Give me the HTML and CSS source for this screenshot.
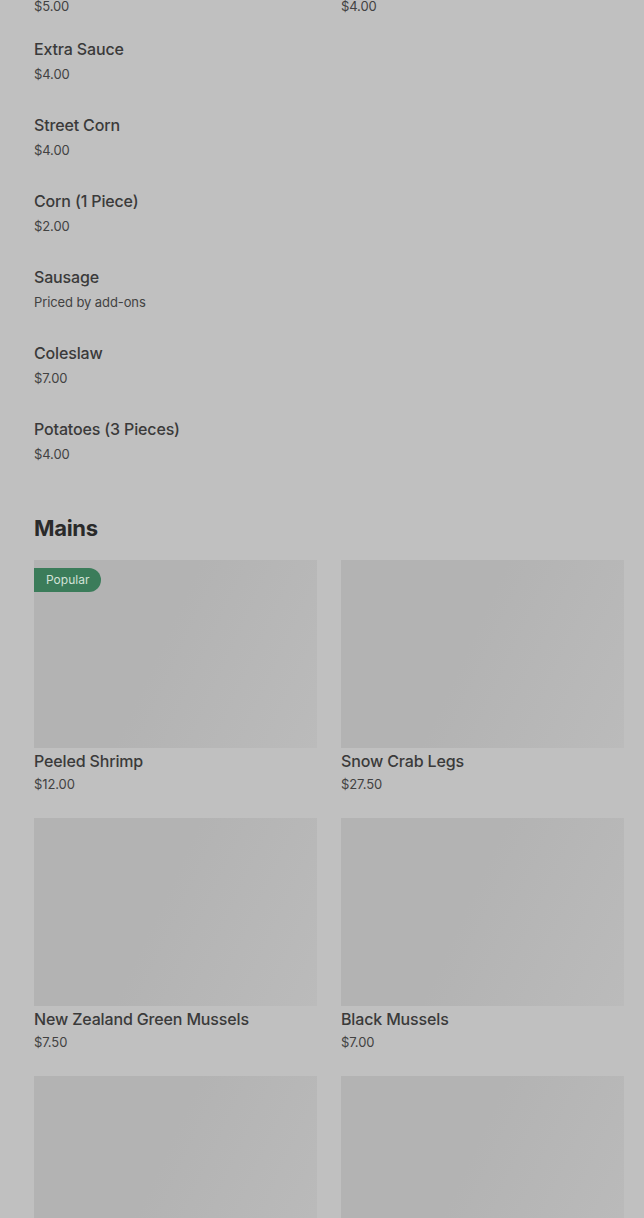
FILE: index.html
```html
<!DOCTYPE html>
<html lang="en">
<head>
    <meta charset="UTF-8">
    <meta name="viewport" content="width=device-width, initial-scale=1.0">
    <title>Menu</title>
    <link rel="stylesheet" href="styles.css">
</head>
<body>
    <div class="menu">
        <div class="item-grid">
            <div class="card">
                <div class="card-image"></div>
                <div class="item-name">Hush Puppies</div>
                <div class="item-price">$5.00</div>
            </div>
            <div class="card">
                <div class="card-image"></div>
                <div class="item-name">Cajun Fries</div>
                <div class="item-price">$4.00</div>
            </div>
        </div>

        <ul class="item-list">
            <li><div class="item-name">Extra Sauce</div><div class="item-price">$4.00</div></li>
            <li><div class="item-name">Street Corn</div><div class="item-price">$4.00</div></li>
            <li><div class="item-name">Corn (1 Piece)</div><div class="item-price">$2.00</div></li>
            <li><div class="item-name">Sausage</div><div class="item-price">Priced by add-ons</div></li>
            <li><div class="item-name">Coleslaw</div><div class="item-price">$7.00</div></li>
            <li><div class="item-name">Potatoes (3 Pieces)</div><div class="item-price">$4.00</div></li>
        </ul>

        <h2 class="section-title">Mains</h2>
        <div class="item-grid">
            <div class="card">
                <div class="card-image">
                    <span class="badge">Popular</span>
                </div>
                <div class="item-name">Peeled Shrimp</div>
                <div class="item-price">$12.00</div>
            </div>
            <div class="card">
                <div class="card-image"></div>
                <div class="item-name">Snow Crab Legs</div>
                <div class="item-price">$27.50</div>
            </div>
            <div class="card">
                <div class="card-image"></div>
                <div class="item-name">New Zealand Green Mussels</div>
                <div class="item-price">$7.50</div>
            </div>
            <div class="card">
                <div class="card-image"></div>
                <div class="item-name">Black Mussels</div>
                <div class="item-price">$7.00</div>
            </div>
            <div class="card">
                <div class="card-image"></div>
                <div class="item-name">Clams</div>
                <div class="item-price">$9.00</div>
            </div>
            <div class="card">
                <div class="card-image"></div>
                <div class="item-name">Crawfish (1 lb)</div>
                <div class="item-price">$14.00</div>
            </div>
        </div>
    </div>
</body>
</html>
```

FILE: styles.css
```css
body {
    margin: 0;
    background-color: #c0c0c0;
    color: #383838;
    font-family: Inter, "Noto Sans", Arial, sans-serif;
    overflow: hidden;
}

.menu {
    padding: 0 20px 40px 34px;
    margin-top: -218px;
}

.item-grid {
    display: grid;
    grid-template-columns: 1fr 1fr;
    column-gap: 24px;
    row-gap: 24px;
}

.card-image {
    position: relative;
    height: 188px;
    background: linear-gradient(115deg, #b3b3b3 45%, #bbbbbb 100%);
}

.badge {
    position: absolute;
    top: 8px;
    left: 0;
    height: 24px;
    line-height: 24px;
    padding: 0 12px;
    font-size: 12px;
    color: #d3e2d8;
    background-color: #3b7c5a;
    border-radius: 0 12px 12px 0;
}

.item-name {
    font-size: 16px;
    font-weight: 500;
    line-height: 22px;
    letter-spacing: -0.15px;
    color: #3a3a3a;
}

.card .item-name {
    margin-top: 2px;
}

.item-price {
    font-size: 13px;
    line-height: 20px;
    letter-spacing: -0.1px;
    color: #424242;
    margin-top: 2px;
}

.item-list {
    list-style-type: none;
    margin: 9px 0 0;
    padding: 0;
}

.item-list li {
    padding: 12px 0 17px;
}

.item-list .item-name {
    line-height: 24px;
}

.item-list .item-price {
    margin-top: 3px;
}

.section-title {
    font-size: 22px;
    font-weight: 700;
    line-height: 32px;
    letter-spacing: -0.3px;
    color: #2a2a2a;
    margin: 31px 0 16px;
}
```
